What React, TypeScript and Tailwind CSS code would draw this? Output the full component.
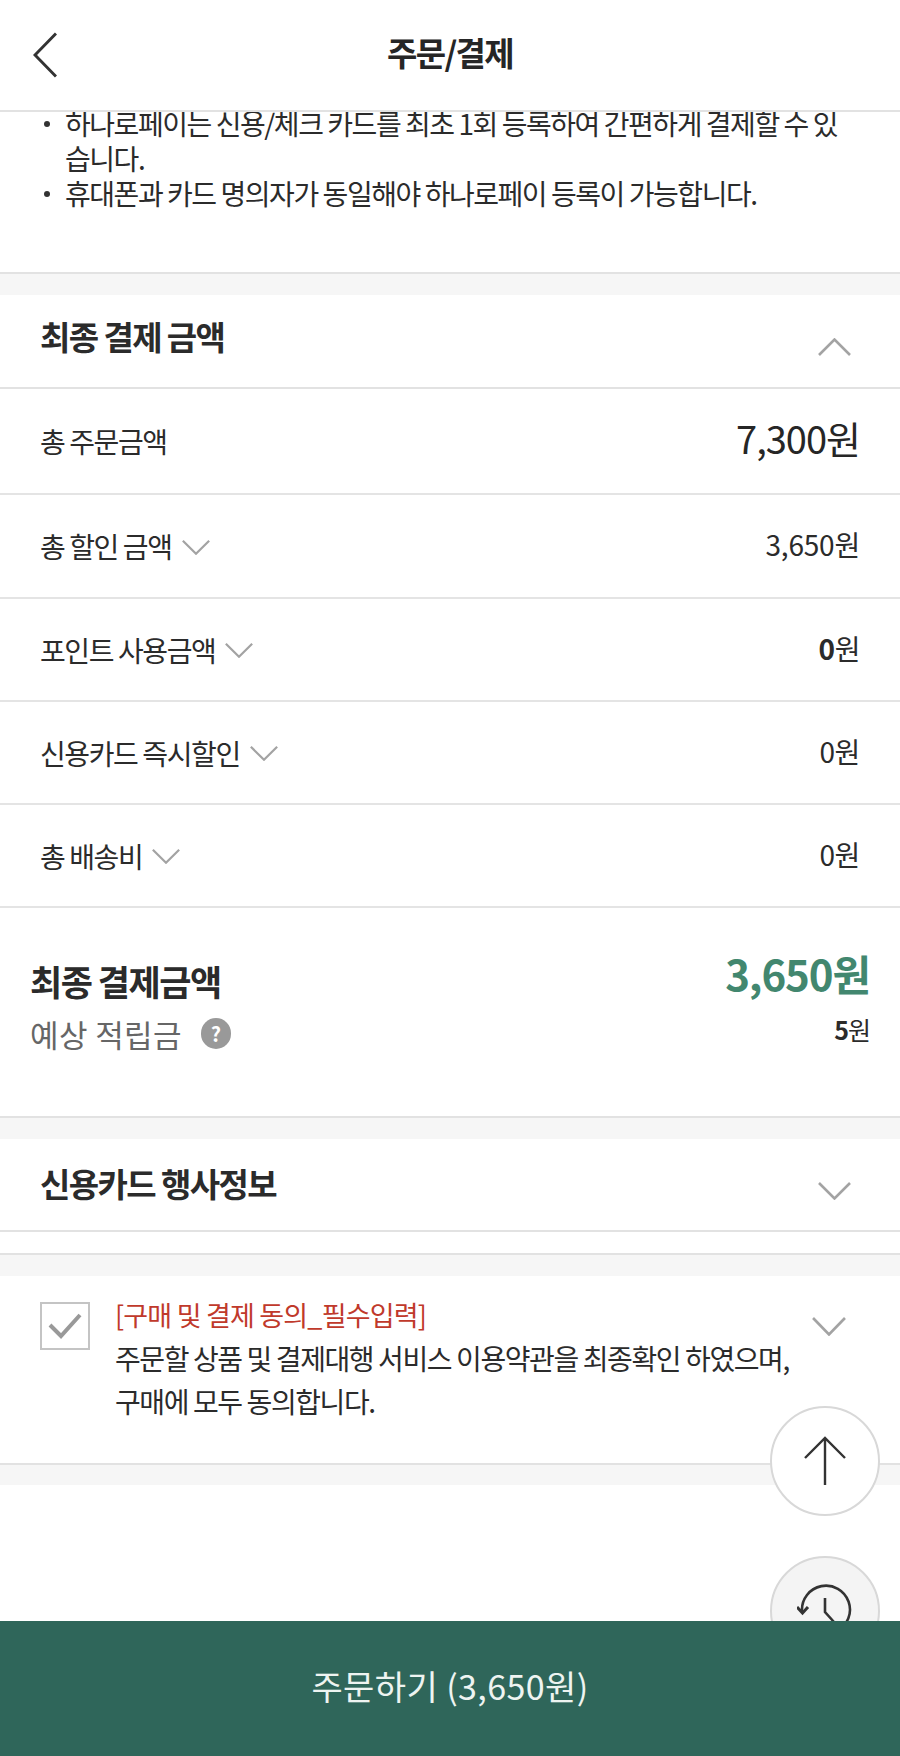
import type { ReactNode } from 'react';

const FONT = "font-['Noto_Sans_CJK_KR','Noto_Sans',sans-serif]";

function Chevron({ up, className }: { up?: boolean; className: string }) {
  return (
    <svg viewBox="0 0 33 18" fill="none" preserveAspectRatio="none" className={className}>
      <path d={up ? 'M1 17L16.5 1.5L32 17' : 'M1 1L16.5 16.5L32 1'} stroke="#a3a3a3" strokeWidth="2.6" />
    </svg>
  );
}

function Band() {
  return <div className="h-[21px] bg-[#f6f6f6]" />;
}

function Row({ label, value, height, expand }: { label: string; value: ReactNode; height: string; expand?: boolean }) {
  return (
    <div className={`flex items-center justify-between border-b-2 border-[#e4e4e4] pl-[40px] pr-[40px] ${height}`}>
      <div className="flex items-center gap-[10px] text-[28px] tracking-[-1.4px] text-[#2b2b2b]">
        <span>{label}</span>
        {expand && <Chevron className="mt-[2px] h-[15px] w-[28px]" />}
      </div>
      {value}
    </div>
  );
}

export default function App() {
  return (
    <div className={`${FONT} flex h-[1756px] w-[900px] flex-col overflow-hidden bg-white`}>
      <header className="relative z-10 flex h-[112px] shrink-0 items-center justify-center border-b-2 border-[#e2e2e2] bg-white">
        <svg viewBox="0 0 24 46" fill="none" className="absolute left-[33px] top-[32px] h-[46px] w-[24px]">
          <path d="M23 1.5L2 23L23 44.5" stroke="#333" strokeWidth="3" />
        </svg>
        <h1 className="mb-[5px] text-[33px] font-bold tracking-[-1.6px] text-[#262626]">주문/결제</h1>
      </header>

      <main className="relative min-h-0 flex-1">
        <section className="h-[162px] overflow-hidden border-b-2 border-[#e2e2e2]">
          <ul className="mt-[-6px] text-[28px] leading-[35px] tracking-[-1.45px] text-[#2b2b2b]">
            <li className="relative pl-[65px]">
              <span className="absolute left-[44px] top-[15px] h-[6px] w-[6px] rounded-full bg-[#333]" />
              하나로페이는 신용/체크 카드를 최초 1회 등록하여 간편하게 결제할 수 있
              <br />
              습니다.
            </li>
            <li className="relative pl-[65px]">
              <span className="absolute left-[44px] top-[15px] h-[6px] w-[6px] rounded-full bg-[#333]" />
              휴대폰과 카드 명의자가 동일해야 하나로페이 등록이 가능합니다.
            </li>
          </ul>
        </section>
        <Band />

        <div className="flex h-[94px] items-center justify-between border-b-2 border-[#e2e2e2] pl-[40px] pr-[49px]">
          <h2 className="mb-[8px] text-[33px] font-bold tracking-[-1.6px] text-[#2b2b2b]">최종 결제 금액</h2>
          <Chevron up className="mt-[12px] h-[18px] w-[33px]" />
        </div>
        <Row
          height="h-[106px]"
          label="총 주문금액"
          value={<span className="mb-[8px] text-[38px] tracking-[-1px] text-[#262626]">7,300원</span>}
        />
        <Row height="h-[104px]" expand label="총 할인 금액" value={<span className="mb-[4px] text-[28px] tracking-[-0.2px] text-[#2b2b2b]">3,650원</span>} />
        <Row
          height="h-[103px]"
          expand
          label="포인트 사용금액"
          value={
            <span className="mb-[4px] text-[28px] tracking-[-0.4px] text-[#2b2b2b]">
              <b>0</b>원
            </span>
          }
        />
        <Row height="h-[103px]" expand label="신용카드 즉시할인" value={<span className="mb-[4px] text-[28px] tracking-[-0.4px] text-[#2b2b2b]">0원</span>} />
        <Row height="h-[103px]" expand label="총 배송비" value={<span className="mb-[4px] text-[28px] tracking-[-0.4px] text-[#2b2b2b]">0원</span>} />

        <section className="h-[210px] border-b-2 border-[#e2e2e2] pl-[30px] pr-[30px] pt-[29px]">
          <div className="flex items-center justify-between">
            <span className="mt-[18px] text-[35px] font-bold tracking-[-1.5px] text-[#2b2b2b]">최종 결제금액</span>
            <span className="text-[42px] font-bold tracking-[-1.1px] text-[#42876f]">3,650원</span>
          </div>
          <div className="mt-[3px] flex items-center justify-between">
            <div className="flex items-center gap-[19px]">
              <span className="text-[31px] tracking-[0.4px] text-[#666]">예상 적립금</span>
              <span className="flex h-[31px] w-[30px] items-center justify-center rounded-full bg-[#999] text-[20px] font-bold leading-none text-white">?</span>
            </div>
            <span className="mb-[8px] text-[25px] tracking-[-1px] text-[#2b2b2b]">
              <b>5</b>원
            </span>
          </div>
        </section>
        <Band />

        <div className="flex h-[93px] items-center justify-between border-b-2 border-[#e2e2e2] pl-[40px] pr-[49px]">
          <h2 className="mb-[1px] text-[33px] font-bold tracking-[-1.6px] text-[#2b2b2b]">신용카드 행사정보</h2>
          <Chevron className="mt-[12px] h-[18px] w-[33px]" />
        </div>
        <div className="h-[23px] border-b-2 border-[#e2e2e2]" />
        <Band />

        <section className="flex h-[189px] items-start border-b-2 border-[#e2e2e2] pl-[40px] pr-[54px] pt-[26px]">
          <div className="flex h-[48px] w-[50px] shrink-0 items-center justify-center border-2 border-[#c4c4c4]">
            <svg viewBox="0 0 34 26" fill="none" className="h-[26px] w-[34px]">
              <path d="M2 12L13 23L32 2" stroke="#999" strokeWidth="4" />
            </svg>
          </div>
          <div className="ml-[25px] mt-[-3px] flex-1">
            <p className="text-[27px] leading-[32px] tracking-[-0.8px] text-[#c0392b]">[구매 및 결제 동의_필수입력]</p>
            <p className="mt-[6px] whitespace-nowrap text-[28px] leading-[43px] tracking-[-1.4px] text-[#2b2b2b]">
              주문할 상품 및 결제대행 서비스 이용약관을 최종확인 하였으며,
              <br />
              구매에 모두 동의합니다.
            </p>
          </div>
          <Chevron className="mt-[15px] h-[19px] w-[34px] shrink-0" />
        </section>
        <div className="h-[20px] bg-[#f6f6f6]" />

        <button className="absolute left-[770px] top-[1294px] flex h-[110px] w-[110px] items-center justify-center rounded-full border-2 border-[#d8d8d8] bg-white">
          <svg viewBox="0 0 44 50" fill="none" className="h-[50px] w-[44px]">
            <path d="M22 49V2M2 22L22 2L42 22" stroke="#333" strokeWidth="2.4" />
          </svg>
        </button>
        <button className="absolute left-[770px] top-[1444px] flex h-[110px] w-[110px] justify-center rounded-full border-2 border-[#d8d8d8] bg-[#f4f4f4] pt-[26px]">
          <svg viewBox="0 0 56 50" fill="none" className="h-[50px] w-[56px]">
            <path d="M5 27A24 24 0 1 1 40 47" stroke="#333" strokeWidth="2.6" />
            <path d="M0 23L5.5 29L11 23" stroke="#333" strokeWidth="3" />
            <path d="M28 14V28L37 38" stroke="#333" strokeWidth="2.6" />
          </svg>
        </button>
      </main>

      <footer className="relative z-10 flex h-[135px] shrink-0 items-center justify-center bg-[#2f665a] pb-[6px] text-[34px] tracking-[0.4px] text-[#eef4f1]">
        주문하기 (3,650원)
      </footer>
    </div>
  );
}
